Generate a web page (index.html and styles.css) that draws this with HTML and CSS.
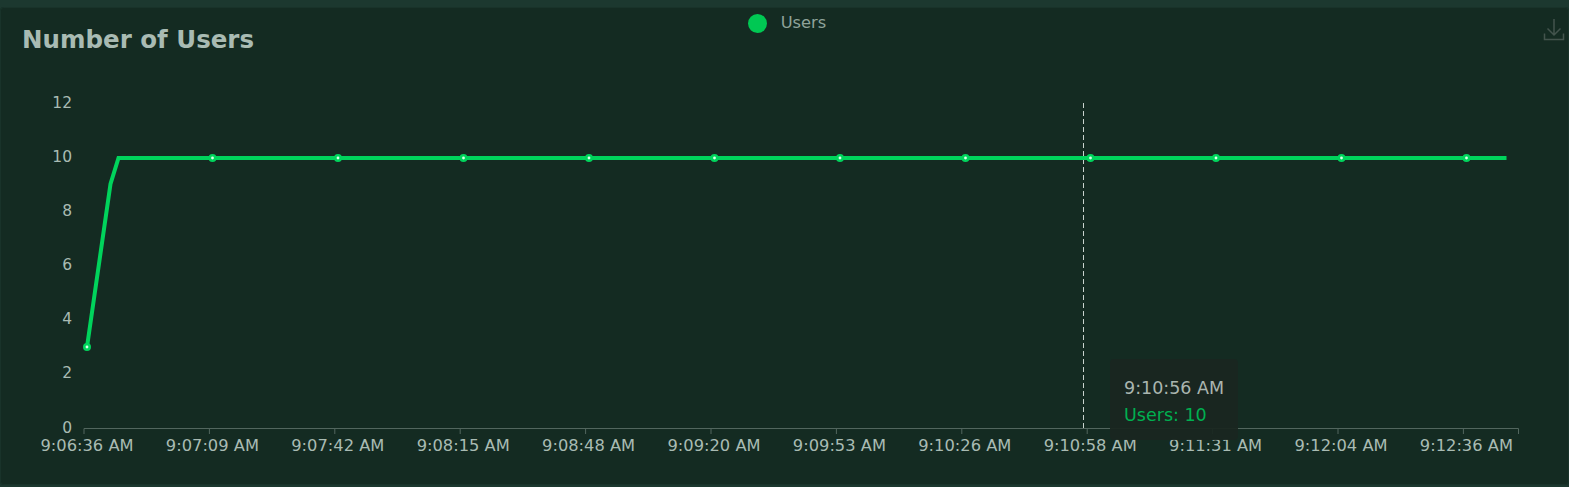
FILE: index.html
```html
<!DOCTYPE html>
<html lang="en">
<head>
<meta charset="utf-8">
<title>Number of Users</title>
<link rel="stylesheet" href="styles.css">
</head>
<body>
<section class="panel">
  <header class="head">
    <h2 class="title">Number of Users</h2>
    <div class="legend"><span class="dot"></span><span class="legend-label">Users</span></div>
    <svg class="save" width="22" height="24" viewBox="0 0 22 24" aria-hidden="true"><path d="M11 1V17M4.500 10.500L11 17L17.500 10.500M1.500 15.500V21.500H20.500V15.500"/></svg>
  </header>
  <svg class="chart" width="1569" height="420" viewBox="0 65 1569 420">
    <g class="ylab">
      <text x="72" y="107.500">12</text><text x="72" y="161.500">10</text><text x="72" y="215.500">8</text><text x="72" y="269.500">6</text><text x="72" y="323.500">4</text><text x="72" y="377.500">2</text><text x="72" y="432.500">0</text>
    </g>
    <path class="axis" d="M84 428.500H1518.500M84 428.500V434M209.400 428.500V434M334.800 428.500V434M460.200 428.500V434M585.600 428.500V434M711 428.500V434M836.400 428.500V434M961.800 428.500V434M1087.200 428.500V434M1212.600 428.500V434M1338 428.500V434M1463.400 428.500V434M1518.500 428.500V434"/>
    <g class="xlab">
      <text x="87" y="451">9:06:36 AM</text><text x="212.400" y="451">9:07:09 AM</text><text x="337.800" y="451">9:07:42 AM</text><text x="463.200" y="451">9:08:15 AM</text><text x="588.600" y="451">9:08:48 AM</text><text x="714" y="451">9:09:20 AM</text><text x="839.400" y="451">9:09:53 AM</text><text x="964.800" y="451">9:10:26 AM</text><text x="1090.200" y="451">9:10:58 AM</text><text x="1215.600" y="451">9:11:31 AM</text><text x="1341" y="451">9:12:04 AM</text><text x="1466.400" y="451">9:12:36 AM</text>
    </g>
    <path class="cross" d="M1083.500 103V428"/>
    <path class="line" d="M87 347L110.500 184L118.500 158H1506.500"/>
    <g class="pts">
      <circle cx="87" cy="347" r="2.700"/><circle cx="212.500" cy="158" r="2.700"/><circle cx="338" cy="158" r="2.700"/><circle cx="463.500" cy="158" r="2.700"/><circle cx="589" cy="158" r="2.700"/><circle cx="714.500" cy="158" r="2.700"/><circle cx="840" cy="158" r="2.700"/><circle cx="965.500" cy="158" r="2.700"/><circle cx="1090.500" cy="158" r="2.700"/><circle cx="1216" cy="158" r="2.700"/><circle cx="1341.500" cy="158" r="2.700"/><circle cx="1466.500" cy="158" r="2.700"/>
    </g>
  </svg>
  <div class="tip">
    <div class="tip-time">9:10:56 AM</div>
    <div class="tip-val">Users: 10</div>
  </div>
</section>
</body>
</html>
```
FILE: styles.css
```css
html, body { margin: 0; padding: 0; }
body {
  width: 1569px;
  height: 487px;
  overflow: hidden;
  background: #1c382f;
  font-family: "DejaVu Sans", sans-serif;
  padding-top: 7px;
  box-sizing: border-box;
}
.panel {
  position: relative;
  height: 478px;
  box-sizing: border-box;
  background: #142b22;
  border-radius: 4px;
  box-shadow: inset 0 0 0 1px #19332a;
}
.head {
  height: 58px;
  display: grid;
  grid-template-columns: 1fr auto 1fr;
  align-items: start;
  padding: 0 4px 0 22px;
  box-sizing: border-box;
}
.title {
  margin: 19px 0 0;
  font-size: 24.500px;
  line-height: 28px;
  font-weight: 700;
  color: #a9bbb3;
}
.legend {
  display: flex;
  align-items: center;
  gap: 14px;
  margin: 7px 0 0 -13px;
}
.dot {
  width: 19px;
  height: 19px;
  border-radius: 50%;
  background: #00c853;
}
.legend-label {
  font-size: 16.300px;
  line-height: 18px;
  margin-bottom: 1px;
  color: #8fa39a;
}
.save {
  justify-self: end;
  margin-top: 11px;
  fill: none;
  stroke: #43544d;
  stroke-width: 1.500;
}
.chart { display: block; }
.ylab text {
  text-anchor: end;
  font-size: 15.500px;
  fill: #a9bbb3;
}
.xlab text {
  text-anchor: middle;
  font-size: 16.300px;
  fill: #a9bbb3;
}
.axis { fill: none; stroke: #52665e; stroke-width: 1; }
.cross { fill: none; stroke: #c9d3ce; stroke-width: 1; stroke-dasharray: 5 3; }
.line { fill: none; stroke: #00d45c; stroke-width: 4; }
.pts circle { fill: #d8ffe8; stroke: #00d45c; stroke-width: 2.600; }
.tip {
  position: absolute;
  left: 1110px;
  top: 352px;
  width: 128px;
  height: 81px;
  box-sizing: border-box;
  padding: 16px 0 0 14px;
  background: rgba(26, 38, 32, 0.94);
  border-radius: 4px;
  font-size: 17.500px;
  line-height: 27px;
  white-space: nowrap;
}
.tip-time { color: #a9b5af; }
.tip-val { color: #00b050; }
```
